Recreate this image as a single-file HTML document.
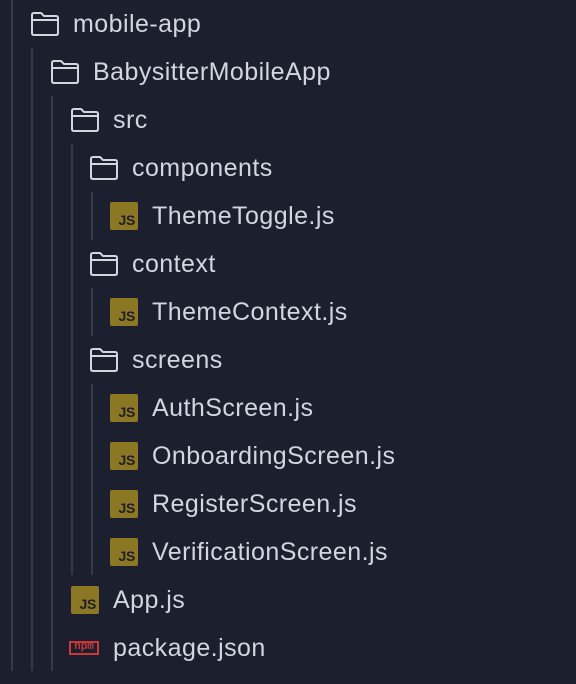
<!DOCTYPE html>
<html><head><style>
body{margin:0;width:576px;height:684px;background:#1b1f2e;overflow:hidden;position:relative;font-family:"Liberation Sans",sans-serif;}
.g{position:absolute;width:2px;background:#353a4a}
.r{position:absolute;height:48px;display:flex;align-items:center;color:#d3d6de;font-size:25px;letter-spacing:0.45px;white-space:nowrap}
.r svg{margin-right:13px;flex:none}
.js{width:28px;height:28px;background:#8c7724;border-radius:2px;position:relative;margin-right:14px;flex:none;letter-spacing:0}
.js span{position:absolute;right:3px;bottom:2px;font-size:14px;font-weight:bold;color:#1d2029;letter-spacing:-0.3px}
.npm{height:10px;border:2px solid #c8373a;margin-right:14px;position:relative;font-size:11px;line-height:9px;color:#c8373a;font-weight:bold;text-align:center;font-family:"Liberation Mono",monospace;letter-spacing:0;overflow:hidden;box-sizing:content-box;width:26px}
</style></head><body>
<div class="g" style="left:11px;top:0;height:671px"></div>
<div class="g" style="left:31px;top:48px;height:623px"></div>
<div class="g" style="left:51px;top:96px;height:575px"></div>
<div class="g" style="left:71px;top:144px;height:431px"></div>
<div class="g" style="left:91px;top:192px;height:48px"></div>
<div class="g" style="left:91px;top:288px;height:48px"></div>
<div class="g" style="left:91px;top:384px;height:191px"></div>
<svg width="0" height="0" style="position:absolute"><defs><symbol id="f" viewBox="0 0 30 26"><path d="M2 4 Q2 2 4 2 H11 L14 5 H26 Q28 5 28 7 V22 Q28 24 26 24 H4 Q2 24 2 22 Z M2 9 H28" fill="none" stroke="#d3d6de" stroke-width="2" stroke-linejoin="round"/></symbol></defs></svg>
<div class="r" style="left:30px;top:0"><svg width="30" height="26"><use href="#f"/></svg>mobile-app</div>
<div class="r" style="left:50px;top:48px"><svg width="30" height="26"><use href="#f"/></svg>BabysitterMobileApp</div>
<div class="r" style="left:70px;top:96px"><svg width="30" height="26"><use href="#f"/></svg>src</div>
<div class="r" style="left:89px;top:144px"><svg width="30" height="26"><use href="#f"/></svg>components</div>
<div class="r" style="left:110px;top:192px"><div class="js"><span>JS</span></div>ThemeToggle.js</div>
<div class="r" style="left:89px;top:240px"><svg width="30" height="26"><use href="#f"/></svg>context</div>
<div class="r" style="left:110px;top:288px"><div class="js"><span>JS</span></div>ThemeContext.js</div>
<div class="r" style="left:89px;top:336px"><svg width="30" height="26"><use href="#f"/></svg>screens</div>
<div class="r" style="left:110px;top:384px"><div class="js"><span>JS</span></div>AuthScreen.js</div>
<div class="r" style="left:110px;top:432px"><div class="js"><span>JS</span></div>OnboardingScreen.js</div>
<div class="r" style="left:110px;top:480px"><div class="js"><span>JS</span></div>RegisterScreen.js</div>
<div class="r" style="left:110px;top:528px"><div class="js"><span>JS</span></div>VerificationScreen.js</div>
<div class="r" style="left:71px;top:576px"><div class="js"><span>JS</span></div>App.js</div>
<div class="r" style="left:69px;top:624px"><div class="npm">npm</div>package.json</div>
</body></html>
